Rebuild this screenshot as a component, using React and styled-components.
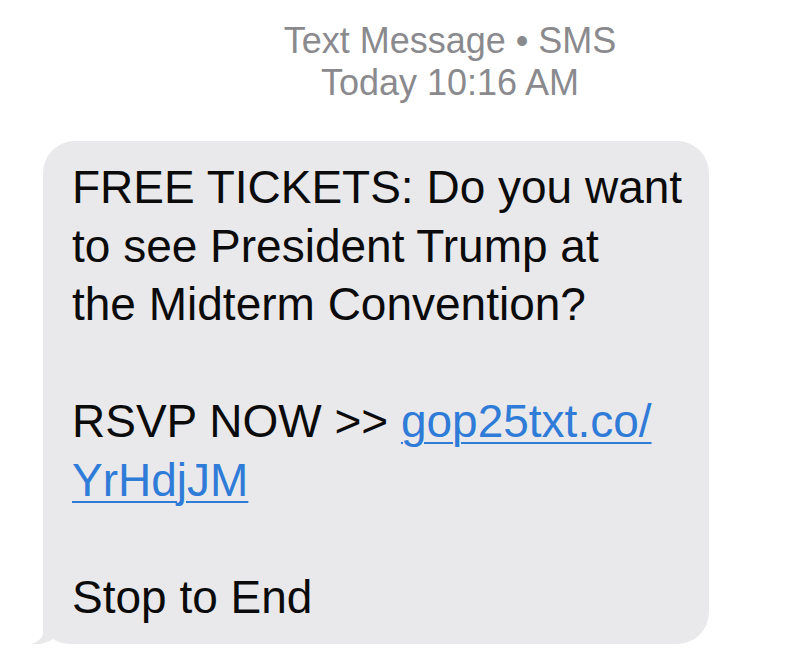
import React from "react";
import styled, { createGlobalStyle } from "styled-components";

const GlobalStyle = createGlobalStyle`
  body {
    margin: 0;
    background: #ffffff;
    font-family: "Liberation Sans", Arial, sans-serif;
  }
`;

const Screen = styled.div`
  width: 800px;
  height: 654px;
  overflow: hidden;
  background: #ffffff;
`;

const Header = styled.div`
  padding: 20px 0 0 100px;
  text-align: center;
  color: #8a8a8e;
  font-size: 36px;
  line-height: 42px;
`;

const Bubble = styled.div`
  position: relative;
  box-sizing: border-box;
  width: 666px;
  margin: 37px 0 0 43px;
  padding: 17px 0 18px 29px;
  background: #e9e9eb;
  border-radius: 32px;
  color: #0b0b0b;
  font-size: 46px;
  line-height: 58.5px;
  white-space: nowrap;
`;

const Link = styled.a`
  color: #2f7bd8;
  text-decoration: underline;
  text-decoration-thickness: 2px;
  text-underline-offset: 5px;
`;

const Tail = styled.svg`
  position: absolute;
  left: -12px;
  bottom: -1px;
`;

function MessageTail() {
  return (
    <Tail width="42" height="32" viewBox="0 0 42 32">
      <path
        d="M12 0 L12 19 C12 25 7 29 0 31 C8 32 16 30 22 26 C27 29 33 31 42 31 L42 0 Z"
        fill="#e9e9eb"
      />
    </Tail>
  );
}

export default function App() {
  return (
    <>
      <GlobalStyle />
      <Screen>
        <Header>
          <div>Text Message • SMS</div>
          <div>Today 10:16 AM</div>
        </Header>
        <Bubble>
          FREE TICKETS: Do you want
          <br />
          to see President Trump at
          <br />
          the Midterm Convention?
          <br />
          <br />
          RSVP NOW &gt;&gt; <Link href="#">gop25txt.co/
          <br />
          YrHdjJM</Link>
          <br />
          <br />
          Stop to End
          <MessageTail />
        </Bubble>
      </Screen>
    </>
  );
}
